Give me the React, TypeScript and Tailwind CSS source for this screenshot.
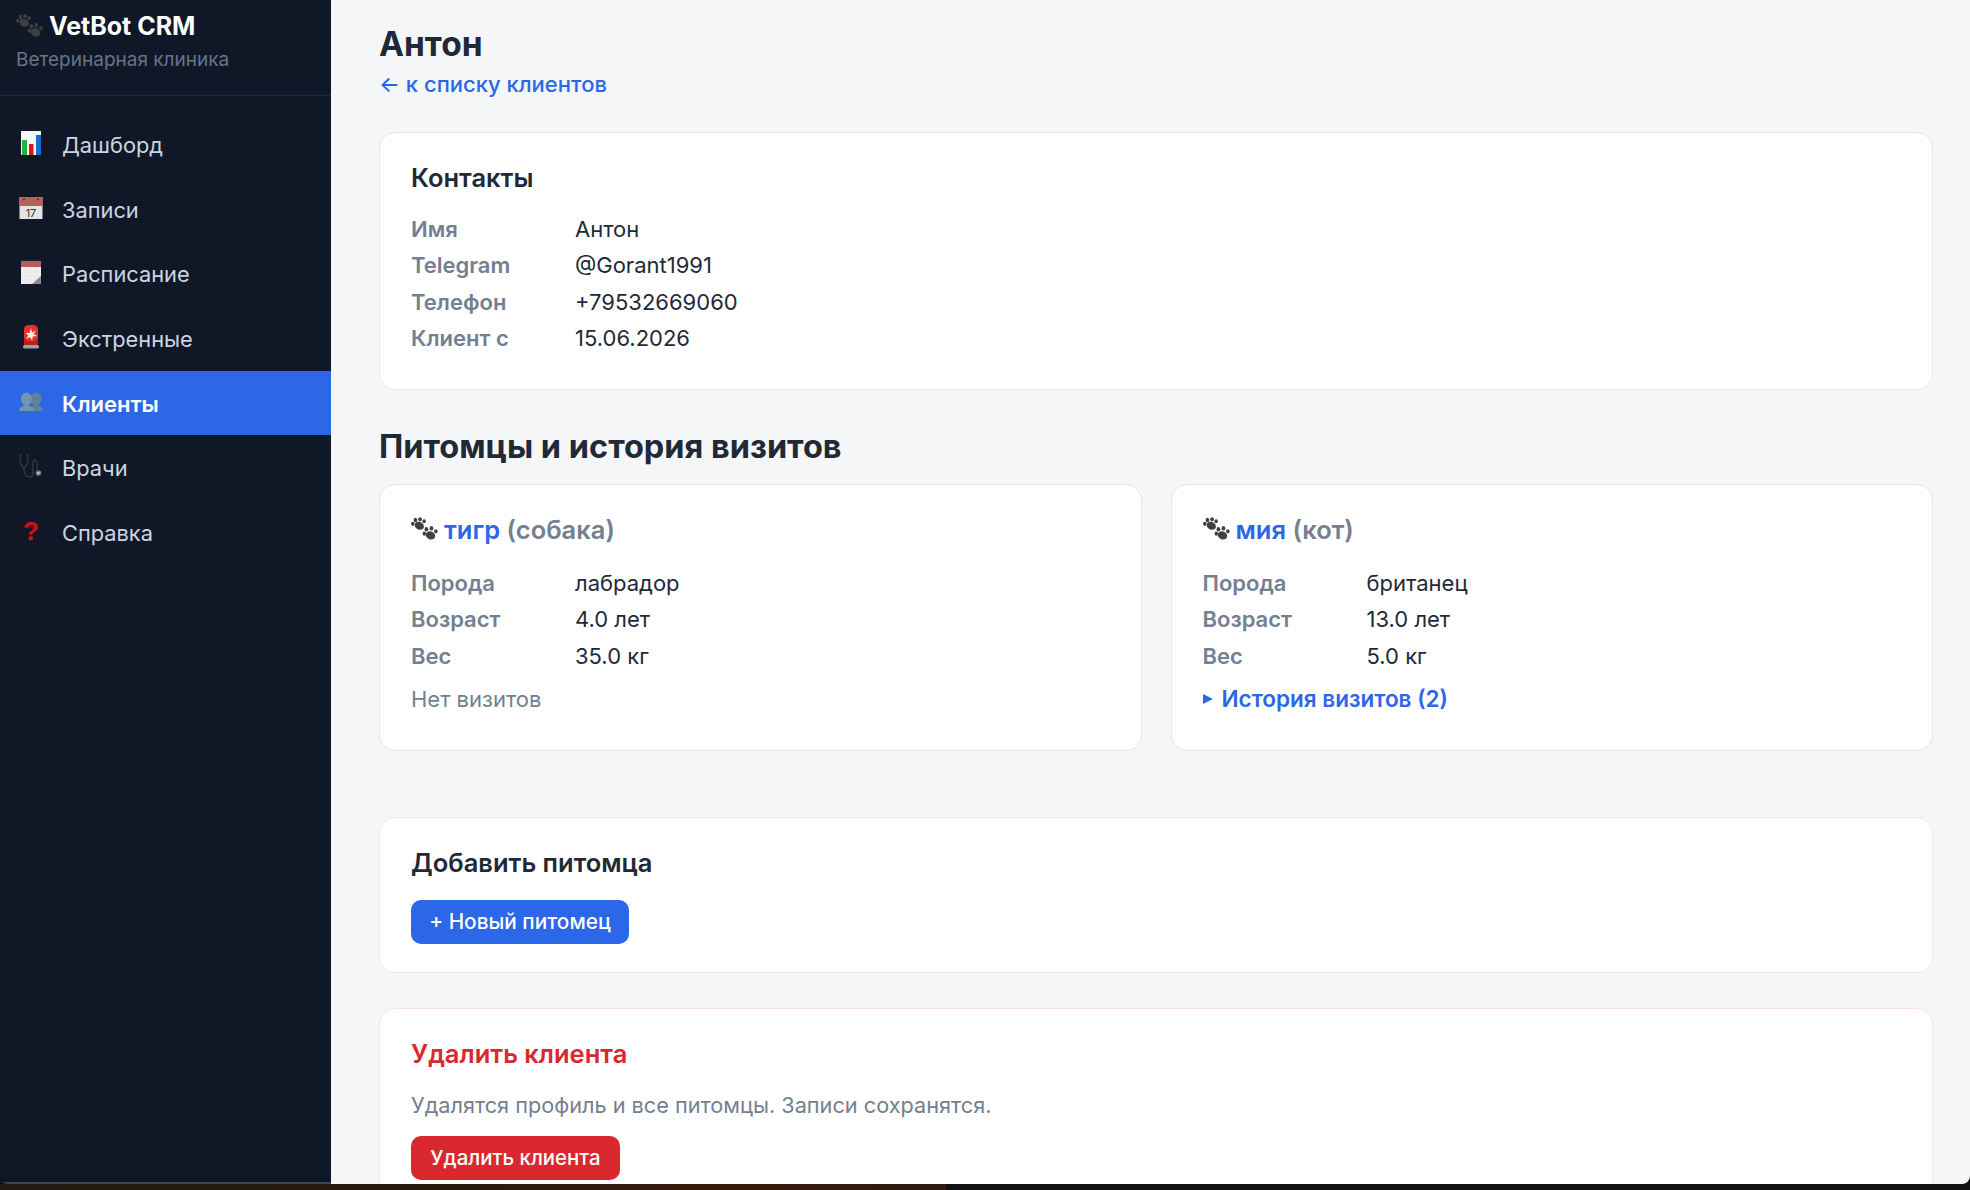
import React from 'react'

const FONT = 'font-["Inter","Liberation_Sans",sans-serif]'

function PawIcon({ className }: { className?: string }) {
  return (
    <svg viewBox="0 0 28 24" className={className}>
      <g fill="#404040">
        <ellipse cx="8.6" cy="8.6" rx="5" ry="3.9" transform="rotate(25 8.6 8.6)" />
        <ellipse cx="1.9" cy="6.6" rx="1.8" ry="2.2" />
        <ellipse cx="4.6" cy="2.6" rx="1.9" ry="2.3" />
        <ellipse cx="9.4" cy="1.9" rx="1.9" ry="2.2" />
        <ellipse cx="13.6" cy="4" rx="1.8" ry="2.1" />
        <ellipse cx="20.2" cy="18.6" rx="5" ry="4.1" transform="rotate(25 20.2 18.6)" />
        <ellipse cx="13.8" cy="16.8" rx="1.8" ry="2.2" />
        <ellipse cx="16" cy="12.2" rx="1.9" ry="2.3" />
        <ellipse cx="21.2" cy="11.2" rx="1.9" ry="2.3" />
        <ellipse cx="25.8" cy="14.4" rx="1.8" ry="2.2" />
      </g>
    </svg>
  )
}

function ChartIcon() {
  return (
    <svg viewBox="0 0 24 26" className="w-[24px] h-[26px]">
      <rect x="2" y="1" width="20" height="24" fill="#f3f6fa" />
      <rect x="3" y="10" width="5" height="15" fill="#22b33a" />
      <rect x="10" y="14" width="4.5" height="11" fill="#d11a1e" />
      <rect x="17" y="5" width="5" height="20" fill="#1d6ad2" />
    </svg>
  )
}

function CalendarIcon() {
  return (
    <svg viewBox="0 0 24 24" className="w-[24px] h-[24px]">
      <rect x="0.5" y="1" width="23" height="22" fill="#e4e4e4" />
      <rect x="0.5" y="1" width="23" height="9" fill="#b9605f" />
      <circle cx="5" cy="3.5" r="1" fill="#333" />
      <circle cx="19" cy="3.5" r="1" fill="#333" />
      <text x="12" y="21" textAnchor="middle" fontSize="11" fill="#333" fontFamily="Inter, sans-serif">17</text>
    </svg>
  )
}

function NotepadIcon() {
  return (
    <svg viewBox="0 0 24 26" className="w-[24px] h-[26px]">
      <rect x="2" y="2" width="20" height="23" fill="#f0f0f0" />
      <rect x="2" y="2" width="20" height="6" fill="#bb5a5a" />
      <path d="M3 2.5h18" stroke="#777" strokeWidth="1.4" strokeDasharray="1 1" />
      <path d="M2 13h20M2 17h20M2 21h20M7 8v17M12 8v17M17 8v17" stroke="#dcdcdc" strokeWidth="0.5" />
      <path d="M13 25 L22 17 L22 25 Z" fill="#8a8a8a" />
    </svg>
  )
}

function SirenIcon() {
  return (
    <svg viewBox="0 0 24 26" className="w-[24px] h-[26px]">
      <path d="M5 6 Q5 1 10 1 H14 Q19 1 19 6 V21 H5 Z" fill="#e2322d" />
      <path d="M5 14 Q12 21 19 14 V21 H5 Z" fill="#b8201e" />
      <path d="M12 4 L13.2 8.4 L17 6.5 L14.6 10 L18 12 L13.8 12.4 L13 16.5 L11 13 L7 15 L9.4 11.4 L6.5 9 L10.4 9 Z" fill="#ffe9e4" />
      <rect x="4" y="21" width="16" height="3.5" rx="1.5" fill="#a0a0a0" />
    </svg>
  )
}

function BustsIcon() {
  return (
    <svg viewBox="0 0 24 20" className="w-[24px] h-[20px]">
      <g fill="#5f829c">
        <ellipse cx="17" cy="7" rx="5.6" ry="6.4" />
        <path d="M9 19 Q9.5 14 17 13 Q23.5 14 24 19 Z" />
      </g>
      <g fill="#7595ad">
        <ellipse cx="7.5" cy="7" rx="5.6" ry="6.4" />
        <path d="M0 19 Q0.5 14 7.5 13 Q15 14 15.5 19 Z" />
      </g>
    </svg>
  )
}

function StethoscopeIcon() {
  return (
    <svg viewBox="0 0 24 26" className="w-[24px] h-[26px]" fill="none">
      <path d="M2 1 Q-1 10 5 15 Q11 10 8 1" stroke="#333a45" strokeWidth="1.3" />
      <path d="M5 15 Q5 24 11 24 Q15 24 14 16 Q13 7 16 7 Q19 8 18 17" stroke="#333a45" strokeWidth="1.3" />
      <circle cx="19.5" cy="20" r="2.8" fill="#777" />
      <circle cx="19.5" cy="20" r="1.1" fill="#ddd" />
    </svg>
  )
}

function QuestionIcon() {
  return <span className="w-[24px] text-center text-[26px] leading-none font-bold text-[#e00a12] font-['Liberation_Sans',sans-serif]">?</span>
}

const navItems = [
  { label: 'Дашборд', icon: <ChartIcon /> },
  { label: 'Записи', icon: <CalendarIcon /> },
  { label: 'Расписание', icon: <NotepadIcon /> },
  { label: 'Экстренные', icon: <SirenIcon /> },
  { label: 'Клиенты', icon: <BustsIcon />, active: true },
  { label: 'Врачи', icon: <StethoscopeIcon /> },
  { label: 'Справка', icon: <QuestionIcon /> },
]

function Sidebar() {
  return (
    <aside className="w-[331px] shrink-0 bg-[#101828] border-b-2 border-[#3a4458]">
      <div className="h-[96px] border-b border-[#1e293b] pl-[16px] pt-[9px]">
        <div className="flex items-center gap-[6px] h-[34px]">
          <PawIcon className="w-[27px] h-[24px]" />
          <span className="text-[25px] font-bold text-white leading-none">VetBot CRM</span>
        </div>
        <div className="text-[19px] text-[#64748b] leading-[34px]">Ветеринарная клиника</div>
      </div>
      <nav className="pt-[16px]">
        {navItems.map((item) => (
          <div
            key={item.label}
            className={
              item.active
                ? 'flex items-center gap-[19px] h-[64.7px] pl-[19px] bg-[#2b67e6] text-white font-semibold text-[22px]'
                : 'flex items-center gap-[19px] h-[64.7px] pl-[19px] text-[#cbd5e1] text-[21.8px]'
            }
          >
            <span className="w-[24px] flex justify-center -mt-[3px]">{item.icon}</span>
            <span className="pt-[2px]">{item.label}</span>
          </div>
        ))}
      </nav>
    </aside>
  )
}

function InfoRow({ label, value }: { label: string; value: string }) {
  return (
    <div className="grid grid-cols-[164px_1fr] leading-[36.4px] text-[22px]">
      <span className="font-semibold text-[#738091]">{label}</span>
      <span className="text-[#1f2937]">{value}</span>
    </div>
  )
}

function PetCard({ name, kind, rows, children }: { name: string; kind: string; rows: [string, string][]; children: React.ReactNode }) {
  return (
    <div className="bg-white rounded-[16px] border border-[#e5e7eb] px-[31px] pt-[28px] h-[267px]">
      <div className="flex items-center gap-[6px] h-[34px] text-[25.5px] font-semibold text-[#738091]">
        <PawIcon className="w-[27px] h-[24px] -mt-[2px]" />
        <span>
          <span className="text-[#2b67e6]">{name}</span> ({kind})
        </span>
      </div>
      <div className="mt-[18px]">
        {rows.map(([label, value]) => (
          <InfoRow key={label} label={label} value={value} />
        ))}
      </div>
      <div className="mt-[8px] leading-[34px] text-[22px]">{children}</div>
    </div>
  )
}

export default function App() {
  return (
    <div className={`h-[1190px] flex flex-col overflow-hidden bg-[#111111] ${FONT}`}>
      <div className="h-[1184px] flex overflow-hidden rounded-b-lg shrink-0">
        <Sidebar />
        <main className="flex-1 min-w-0 bg-[#f4f6f8] pl-[48px] pr-[37px] overflow-hidden">
          <h1 className="text-[33.5px] font-bold text-[#1f2937] leading-[40px] mt-[24px]">Антон</h1>
          <a className="block text-[22px] font-medium text-[#2b67e6] leading-[26px] mt-[7px]">← к списку клиентов</a>

          <section className="mt-[35px] h-[258px] bg-white rounded-[16px] border border-[#e5e7eb] px-[31px] pt-[28px]">
            <h3 className="text-[25.5px] font-semibold text-[#1f2937] leading-[34px]">Контакты</h3>
            <div className="mt-[16px]">
              <InfoRow label="Имя" value="Антон" />
              <InfoRow label="Telegram" value="@Gorant1991" />
              <InfoRow label="Телефон" value="+79532669060" />
              <InfoRow label="Клиент с" value="15.06.2026" />
            </div>
          </section>

          <h2 className="mt-[37px] text-[32.5px] font-bold text-[#1f2937] leading-[40px]">Питомцы и история визитов</h2>

          <div className="mt-[17px] grid grid-cols-2 gap-[29px]">
            <PetCard
              name="тигр"
              kind="собака"
              rows={[
                ['Порода', 'лабрадор'],
                ['Возраст', '4.0 лет'],
                ['Вес', '35.0 кг'],
              ]}
            >
              <span className="text-[#738091]">Нет визитов</span>
            </PetCard>
            <PetCard
              name="мия"
              kind="кот"
              rows={[
                ['Порода', 'британец'],
                ['Возраст', '13.0 лет'],
                ['Вес', '5.0 кг'],
              ]}
            >
              <span className="flex items-center gap-[9px] font-semibold text-[22.5px] text-[#2b67e6]">
                <span className="w-0 h-0 border-y-[5.5px] border-y-transparent border-l-[10px] border-l-[#2b67e6]" />
                История визитов (2)
              </span>
            </PetCard>
          </div>

          <section className="mt-[66px] h-[156px] bg-white rounded-[16px] border border-[#fee2e2] px-[31px] pt-[28px]">
            <h3 className="text-[25.5px] font-semibold text-[#1f2937] leading-[34px]">Добавить питомца</h3>
            <button className="mt-[20px] h-[44px] w-[218px] rounded-[10px] bg-[#2b67e6] text-white text-[20.8px] font-medium">+ Новый питомец</button>
          </section>

          <section className="mt-[35px] h-[300px] bg-white rounded-[16px] border border-[#fee2e2] px-[31px] pt-[28px]">
            <h3 className="text-[25.5px] font-semibold text-[#da2830] leading-[34px]">Удалить клиента</h3>
            <p className="mt-[17px] text-[21.7px] text-[#738091] leading-[34px]">Удалятся профиль и все питомцы. Записи сохранятся.</p>
            <button className="mt-[14px] h-[44px] w-[209px] rounded-[10px] bg-[#da2830] text-white text-[20.4px] font-medium">Удалить клиента</button>
          </section>
        </main>
      </div>
      <div className="h-[6px] shrink-0 flex">
        <div className="w-[946px] bg-[linear-gradient(90deg,#1f1a10,#2a1a0c_50%,#3a1a0c_80%,#2a1a10)]" />
        <div className="flex-1 bg-[#111111]" />
      </div>
    </div>
  )
}
